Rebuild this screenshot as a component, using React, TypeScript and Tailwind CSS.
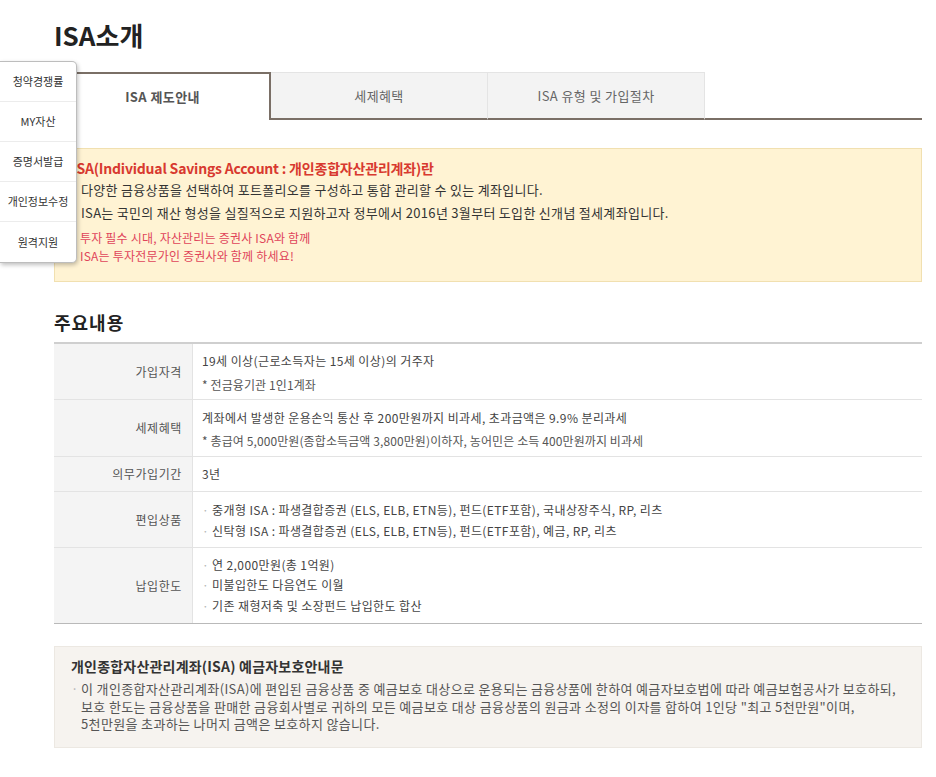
import React from 'react';

const font = { fontFamily: '"Noto Sans CJK KR", "Noto Sans", sans-serif' };

const quickMenu = ['청약경쟁률', 'MY자산', '증명서발급', '개인정보수정', '원격지원'];

const Dot = () => <span className="inline-block w-[10px] text-[#b5b5b5]">·</span>;

const Row: React.FC<{ label: string; h: string; last?: boolean; children: React.ReactNode }> = ({ label, h, last, children }) => (
    <div className={`flex ${h} ${last ? 'border-b border-[#b9b9b9]' : 'border-b border-[#e3e3e3]'}`}>
        <div className="w-[139px] shrink-0 bg-[#f4f4f4] border-r border-[#e3e3e3] flex items-center justify-end pr-[10px] text-[12px] tracking-[0.6px] text-[#555]">
            {label}
        </div>
        <div className="flex-1 flex flex-col justify-center pl-[9px] text-[12px] tracking-[0.4px] text-[#444]">{children}</div>
    </div>
);

export default function App() {
    return (
        <div className="relative w-[936px] min-h-[777px] bg-white text-[#333]" style={font}>
            {/* quick menu */}
            <div className="absolute left-0 top-[61px] w-[77px] bg-white border border-l-0 border-[#bdbdbd] rounded-r-[5px] shadow-[1px_2px_4px_rgba(0,0,0,0.25)] z-10">
                {quickMenu.map((m, i) => (
                    <div
                        key={m}
                        className={`h-[40px] flex items-center justify-center text-[11px] text-[#333] ${i < quickMenu.length - 1 ? 'border-b border-[#ececec]' : ''}`}
                    >
                        {m}
                    </div>
                ))}
            </div>

            <div className="pl-[54px] w-[922px]">
                <h1 className="pt-[17px] text-[26px] leading-[36px] font-bold text-[#222]">ISA소개</h1>

                {/* tabs */}
                <div className="flex mt-[19px] h-[48px]">
                    <div className="w-[217px] bg-white border-2 border-b-0 border-[#7a6f66] flex items-center justify-center text-[13px] tracking-[0.4px] font-bold text-[#555]">
                        ISA 제도안내
                    </div>
                    <div className="w-[217px] bg-[#f3f3f3] border-t border-r border-[#e4e4e4] border-b-2 border-b-[#7a6f66] flex items-center justify-center text-[13px] tracking-[0.4px] text-[#666]">
                        세제혜택
                    </div>
                    <div className="w-[217px] bg-[#f3f3f3] border-t border-r border-[#e4e4e4] border-b-2 border-b-[#7a6f66] flex items-center justify-center text-[13px] tracking-[0.4px] text-[#666]">
                        ISA 유형 및 가입절차
                    </div>
                    <div className="flex-1 border-b-2 border-[#7a6f66]" />
                </div>

                {/* intro box */}
                <div className="mt-[28px] h-[134px] bg-[#fff3d3] border border-[#f1e0b0] pl-[17px] pt-[9px]">
                    <p className="text-[14px] leading-[20px] font-bold tracking-[-0.2px] text-[#d8392f]">
                        ISA(Individual Savings Account : 개인종합자산관리계좌)란
                    </p>
                    <ul className="text-[13px] leading-[23px] tracking-[0.3px] text-[#333] pl-[9px]">
                        <li>다양한 금융상품을 선택하여 포트폴리오를 구성하고 통합 관리할 수 있는 계좌입니다.</li>
                        <li>ISA는 국민의 재산 형성을 실질적으로 지원하고자 정부에서 2016년 3월부터 도입한 신개념 절세계좌입니다.</li>
                    </ul>
                    <div className="mt-[5px] pl-[8px] text-[12px] leading-[18px] tracking-[0.2px] text-[#e0445a]">
                        <p>투자 필수 시대, 자산관리는 증권사 ISA와 함께</p>
                        <p>ISA는 투자전문가인 증권사와 함께 하세요!</p>
                    </div>
                </div>

                <h2 className="mt-[28px] text-[18px] leading-[24px] font-bold tracking-[1px] text-[#222]">주요내용</h2>

                {/* table */}
                <div className="mt-[8px] border-t-2 border-[#cfcfcf]">
                    <Row label="가입자격" h="h-[56px]">
                        <p className="leading-[22px]">19세 이상(근로소득자는 15세 이상)의 거주자</p>
                        <p className="mt-[4px] leading-[18px] text-[12px] tracking-[0.1px] text-[#555]">* 전금융기관 1인1계좌</p>
                    </Row>
                    <Row label="세제혜택" h="h-[57px]">
                        <p className="leading-[22px]">계좌에서 발생한 운용손익 통산 후 200만원까지 비과세, 초과금액은 9.9% 분리과세</p>
                        <p className="mt-[3px] leading-[18px] text-[12px] tracking-[0.1px] text-[#555]">* 총급여 5,000만원(종합소득금액 3,800만원)이하자, 농어민은 소득 400만원까지 비과세</p>
                    </Row>
                    <Row label="의무가입기간" h="h-[35px]">
                        <p className="leading-[20px]">3년</p>
                    </Row>
                    <Row label="편입상품" h="h-[56px]">
                        <p className="leading-[21px]"><Dot />중개형 ISA : 파생결합증권 (ELS, ELB, ETN등), 펀드(ETF포함), 국내상장주식, RP, 리츠</p>
                        <p className="leading-[21px]"><Dot />신탁형 ISA : 파생결합증권 (ELS, ELB, ETN등), 펀드(ETF포함), 예금, RP, 리츠</p>
                    </Row>
                    <Row label="납입한도" h="h-[76px]" last>
                        <p className="leading-[20.5px]"><Dot />연 2,000만원(총 1억원)</p>
                        <p className="leading-[20.5px]"><Dot />미불입한도 다음연도 이월</p>
                        <p className="leading-[20.5px]"><Dot />기존 재형저축 및 소장펀드 납입한도 합산</p>
                    </Row>
                </div>

                {/* deposit protection */}
                <div className="mt-[22px] h-[102px] bg-[#f6f3ef] border border-[#ece8e2] pl-[16px] pt-[9px]">
                    <p className="text-[14px] leading-[20px] font-bold tracking-[0.2px] text-[#333]">개인종합자산관리계좌(ISA) 예금자보호안내문</p>
                    <div className="mt-[4px] text-[13px] leading-[17.5px] tracking-[0.35px] text-[#555] whitespace-nowrap">
                        <p><Dot />이 개인종합자산관리계좌(ISA)에 편입된 금융상품 중 예금보호 대상으로 운용되는 금융상품에 한하여 예금자보호법에 따라 예금보험공사가 보호하되,</p>
                        <p className="pl-[10px]">보호 한도는 금융상품을 판매한 금융회사별로 귀하의 모든 예금보호 대상 금융상품의 원금과 소정의 이자를 합하여 1인당 "최고 5천만원"이며,</p>
                        <p className="pl-[10px]">5천만원을 초과하는 나머지 금액은 보호하지 않습니다.</p>
                    </div>
                </div>
            </div>
        </div>
    );
}
